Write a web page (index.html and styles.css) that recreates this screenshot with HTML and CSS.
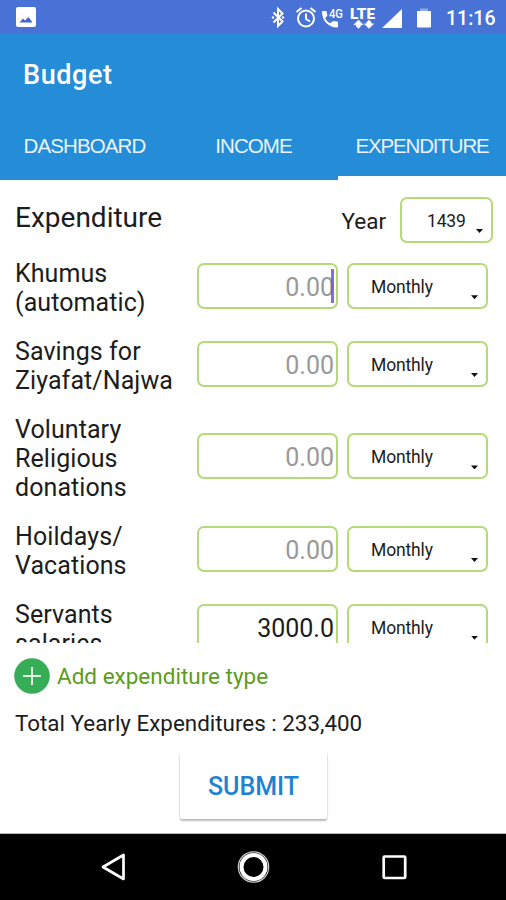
FILE: index.html
```html
<!DOCTYPE html>
<html lang="en">
<head>
<meta charset="utf-8">
<title>Budget</title>
<link rel="stylesheet" href="styles.css">
</head>
<body>
<div class="screen">
  <div class="status">
    <svg class="picture-icon" viewBox="0 0 20 20"><rect width="20" height="20" rx="2" fill="#fff"/><path d="M3.500 15.500l3.500-4 2 2 3.500-3.500 4 5.500z" fill="#3f66cc"/></svg>
    <svg class="status-icons" viewBox="0 0 170 34" fill="#fff">
      <path d="M3.500 12.500l9 9-4.500 4.500V9l4.500 4.500-9 9" fill="none" stroke="#fff" stroke-width="2"/>
      <circle cx="3" cy="17.500" r="1.200"/><circle cx="13" cy="17.500" r="1.200"/>
      <circle cx="36" cy="18.500" r="8" fill="none" stroke="#fff" stroke-width="2"/>
      <path d="M36 13.500v5.500l4 2.500M26.500 12l5-4M45.500 12l-5-4" fill="none" stroke="#fff" stroke-width="2"/>
      <path d="M53 11c-.6 0-1 .4-1 1 0 8.500 6.500 15.500 15 15.500.6 0 1-.4 1-1v-4c0-.6-.4-1-1-1l-4-.6-2.800 2.400c-2.500-1.300-3.800-2.600-5-5l2.200-2.800-.7-3.700c0-.5-.4-.8-.9-.8z"/>
      <text x="59" y="17.500" class="four-g" textLength="14" lengthAdjust="spacingAndGlyphs">4G</text>
      <text x="80" y="18.500" class="lte" textLength="25" lengthAdjust="spacingAndGlyphs">LTE</text>
      <path d="M88.500 20l4.700 4.700h-2.500v1.500l-2.200 2.300-2.200-2.300v-1.500h-2.500zM99 28.500l-4.700-4.700h2.500v-1.500L99 20l2.200 2.300v1.500h2.500z" stroke="#fff" stroke-width=".5"/>
      <path d="M112 28L132 9v19z"/>
      <path d="M150 8.500h8v2.500h-8z" opacity=".4"/><path d="M147 11h14v15.500q0 1-1 1h-12q-1 0-1-1z"/>
    </svg>
    <span class="clock">11:16</span>
  </div>
  <header class="appbar">
    <h1 class="title">Budget</h1>
    <nav class="tabs">
      <a class="tab">DASHBOARD</a>
      <a class="tab">INCOME</a>
      <a class="tab active">EXPENDITURE</a>
    </nav>
  </header>
  <main class="content">
    <div class="head">
      <h2 class="heading">Expenditure</h2>
      <span class="year-label">Year</span>
      <div class="select year"><span>1439</span><i class="caret"></i></div>
    </div>
    <div class="rows">
      <div class="row"><div class="label">Khumus<br>(automatic)</div><div class="amount hint focus">0.00</div><div class="select"><span>Monthly</span><i class="caret"></i></div></div>
      <div class="row"><div class="label">Savings for<br>Ziyafat/Najwa</div><div class="amount hint">0.00</div><div class="select"><span>Monthly</span><i class="caret"></i></div></div>
      <div class="row"><div class="label">Voluntary<br>Religious<br>donations</div><div class="amount hint">0.00</div><div class="select"><span>Monthly</span><i class="caret"></i></div></div>
      <div class="row"><div class="label">Hoildays/<br>Vacations</div><div class="amount hint">0.00</div><div class="select"><span>Monthly</span><i class="caret"></i></div></div>
      <div class="row"><div class="label">Servants<br>salaries</div><div class="amount">3000.0</div><div class="select"><span>Monthly</span><i class="caret"></i></div></div>
    </div>
    <div class="add">
      <svg class="plus" viewBox="0 0 36 36"><circle cx="18" cy="18" r="17.800" fill="#37ad58"/><path d="M18 9v18M9 18h18" stroke="#d8f3de" stroke-width="2"/></svg>
      <span class="add-text">Add expenditure type</span>
    </div>
    <div class="total">Total Yearly Expenditures : 233,400</div>
    <div class="submit-area"><div class="submit">SUBMIT</div></div>
  </main>
  <footer class="navbar">
    <svg class="nav-icons" viewBox="0 0 506 66" fill="none" stroke="#fff">
      <path d="M103 33L123.500 21v24z" stroke-width="2.700" stroke-linejoin="round"/>
      <circle cx="253.500" cy="33" r="15.200" stroke="#ccc" stroke-width="1.200"/>
      <circle cx="253.500" cy="33" r="12" stroke-width="4"/>
      <rect x="383.700" y="22.500" width="21.500" height="21.500" rx="1" stroke-width="2.700"/>
    </svg>
  </footer>
</div>
</body>
</html>
```
FILE: styles.css
```css
* { box-sizing: border-box; }
body { margin: 0; background: #fff; font-family: Roboto, sans-serif; color: #1c1c1c; }
.screen { width: 506px; height: 900px; display: flex; flex-direction: column; overflow: hidden; }
.status { height: 34px; flex: none; background: #4872d6; display: flex; align-items: center; padding-left: 16px; color: #fff; }
.picture-icon { width: 20px; height: 20px; }
.status-icons { width: 170px; height: 34px; margin-left: 234px; }
.four-g { font: 500 12px Roboto, sans-serif; }
.lte { font: 900 15px Roboto, sans-serif; }
.clock { font-size: 19.500px; font-weight: 500; margin-left: 6px; padding-top: 3px; }
.appbar { height: 146px; flex: none; background: #258cd8; color: #fff; display: flex; flex-direction: column; }
.title { margin: 0; height: 76px; padding: 5px 0 0 23px; line-height: 73px; font-size: 27px; font-weight: 500; letter-spacing: .6px; }
.tabs { display: grid; grid-template-columns: 169px 169px 168px; height: 70px; }
.tab { height: 70px; font: 20.5px/71px "Liberation Sans", sans-serif; letter-spacing: -.9px; text-align: center; color: #eaf4ff; white-space: nowrap; }
.tab.active { border-bottom: 4px solid #fff; letter-spacing: -1.150px; }
.content { flex: 1; display: flex; flex-direction: column; min-height: 0; border-bottom: 1px solid #bbb; }
.head { height: 67px; flex: none; display: flex; align-items: flex-start; padding: 17px 13px 0 15px; }
.heading { flex: 1; margin: 0; font-size: 28px; font-weight: 400; line-height: 41px; }
.year-label { font-size: 22.500px; line-height: 49px; margin-right: 14px; }
.select { position: relative; width: 141px; height: 46px; border: 2px solid #b4db78; border-radius: 7px; font-size: 17.500px; line-height: 44px; padding-left: 22px; letter-spacing: -.15px; }
.select.year { width: 93px; padding-left: 25px; line-height: 45px; }
.caret { position: absolute; right: 8px; bottom: 8px; width: 7px; height: 4px; background: #111; clip-path: polygon(0 0, 100% 0, 50% 100%); }
.rows { height: 396px; flex: none; overflow: hidden; padding: .4px 19px 0 15px; }
.row { display: grid; grid-template-columns: 182px 141px 141px; align-items: center; padding: 9.600px 0; }
.row .select { margin-left: 9px; }
.label { position: relative; top: 2.200px; font-size: 25px; line-height: 29.300px; letter-spacing: .08px; }
.amount { position: relative; height: 46px; border: 2px solid #b4db78; border-radius: 7px; text-align: right; padding-right: 2px; font-size: 25px; line-height: 46px; }
.hint { color: #999; }
.focus::after { content: ""; position: absolute; right: 2px; top: 4px; width: 3px; height: 34px; background: #6757d8; opacity: .85; }
.add { height: 65px; flex: none; display: flex; align-items: center; padding-left: 14px; }
.plus { width: 36px; height: 36px; margin-right: 7px; }
.add-text { font-size: 22.500px; color: #5a9c1c; padding-top: 1px; }
.total { flex: none; padding-left: 15px; font-size: 22.400px; line-height: 30px; }
.submit-area { display: flex; overflow: hidden; height: 85px; padding: 14px 0 0 180px; }
.submit { width: 147px; height: 67px; line-height: 69px; text-align: center; color: #1c83d2; font-size: 25px; font-weight: 500; border-radius: 2px; box-shadow: 0 2px 2px rgba(0,0,0,.25), 0 0 2px rgba(0,0,0,.15); clip-path: inset(0 -3px -5px -3px); }
.navbar { height: 66px; flex: none; background: #000; }
.nav-icons { display: block; width: 506px; height: 66px; }
```
